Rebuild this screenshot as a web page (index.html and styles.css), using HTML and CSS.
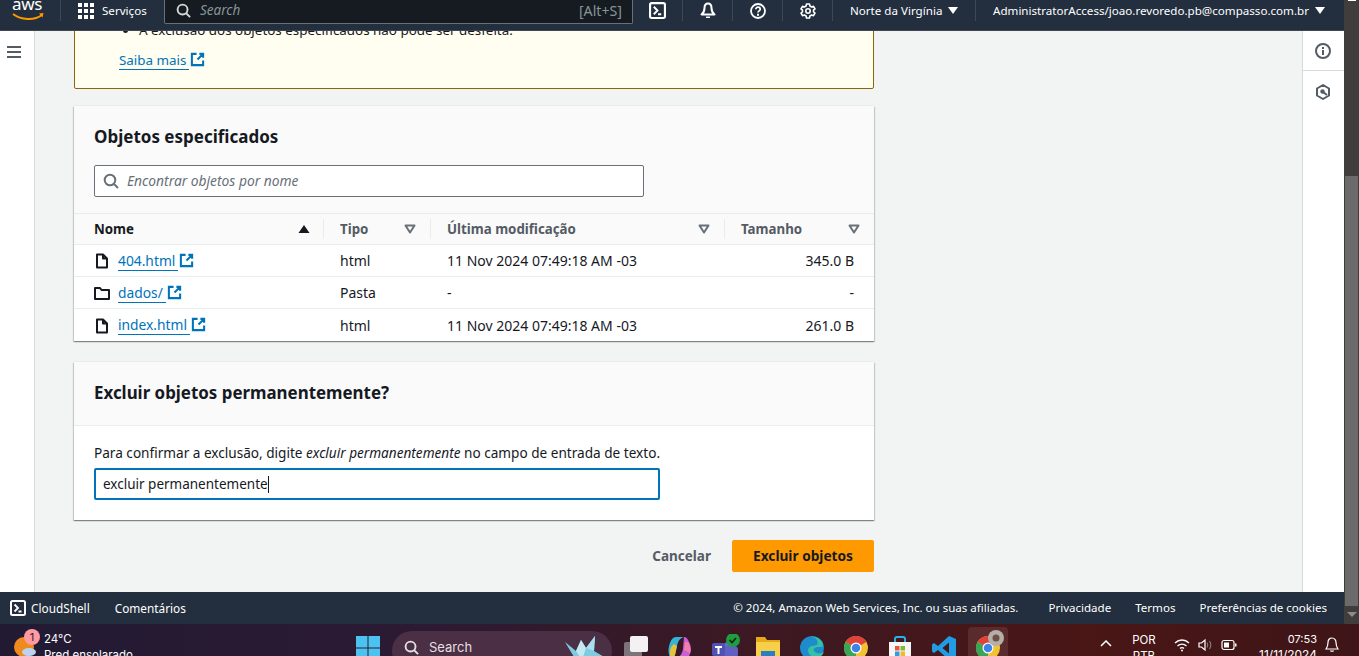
FILE: index.html
```html
<!DOCTYPE html>
<html lang="pt-BR">
<head>
<meta charset="utf-8">
<title>Excluir objetos</title>
<link rel="stylesheet" href="styles.css">
</head>
<body>
<svg class="defs" width="0" height="0" aria-hidden="true">
  <symbol id="ext" viewBox="0 0 16 16"><path d="M7 2H2v12h12V9M10 2h4v4M14 2L8 8" fill="none" stroke="currentColor" stroke-width="2.2"/></symbol>
  <symbol id="file" viewBox="0 0 16 16"><path d="M9 1.500H3v13h10V5.500zM9 1.500v4h4" fill="none" stroke="currentColor" stroke-width="2" stroke-linejoin="round"/></symbol>
  <symbol id="folder" viewBox="0 0 16 16"><path d="M1 3h5l1.500 2H15v9H1z" fill="none" stroke="currentColor" stroke-width="2" stroke-linejoin="round"/></symbol>
  <symbol id="shell" viewBox="0 0 16 16"><rect x="1" y="1" width="14" height="14" rx="1.500" fill="none" stroke="currentColor" stroke-width="2"/><path d="M4.500 4.500L8 8l-3.500 3.500M8.500 11.500H11.500" fill="none" stroke="currentColor" stroke-width="1.800"/></symbol>
  <symbol id="down" viewBox="0 0 12 10"><path d="M1.500 1.500h9L6 8.500z" fill="none" stroke="currentColor" stroke-width="2" stroke-linejoin="round"/></symbol>
  <symbol id="lens" viewBox="0 0 16 16"><circle cx="7" cy="7" r="5.300" fill="none" stroke="currentColor" stroke-width="2"/><path d="M11 11l4 4" stroke="currentColor" stroke-width="2"/></symbol>
  <symbol id="chrome" viewBox="0 0 24 24"><circle cx="12" cy="12" r="12" fill="#f2c230"/><path d="M12 12L1.600 6A12 12 0 0 1 22.400 6z" fill="#e0423a"/><path d="M12 12L1.600 6A12 12 0 0 0 12 24z" fill="#3aa655"/><circle cx="12" cy="12" r="5.500" fill="#fff"/><circle cx="12" cy="12" r="4.300" fill="#3f83ea"/></symbol>
</svg>

<div class="screen">
  <div class="window">
    <div class="app">
      <header class="topbar">
        <div class="logo">
          <span class="logo-text">aws</span>
          <svg class="logo-smile" viewBox="0 0 32 8" width="32" height="8"><path d="M1 1c8 6 21 7 29 1" fill="none" stroke="#f90" stroke-width="2"/><path d="M27 0.500l4.500-.5-1 4.500z" fill="#f90"/></svg>
        </div>
        <div class="services">
          <svg class="grid-icon" viewBox="0 0 16 16" width="16" height="16"><path d="M0 0h4v4H0zM6 0h4v4H6zM12 0h4v4h-4zM0 6h4v4H0zM6 6h4v4H6zM12 6h4v4h-4zM0 12h4v4H0zM6 12h4v4H6zM12 12h4v4h-4z" fill="#fff"/></svg>
          <span>Serviços</span>
        </div>
        <div class="topsearch">
          <svg class="tb-lens" width="15" height="15"><use href="#lens"/></svg>
          <span class="ts-ph">Search</span>
          <span class="ts-key">[Alt+S]</span>
        </div>
        <div class="tb-icon tb-first"><svg width="17" height="17"><use href="#shell"/></svg></div>
        <div class="tb-icon">
          <svg width="16" height="17" viewBox="0 0 16 17"><path d="M8 1.500c-2.500 0-3.500 2-3.500 4.500 0 3-1 5-3 6.500h13c-2-1.500-3-3.500-3-6.500 0-2.500-1-4.500-3.500-4.500z" fill="none" stroke="#fff" stroke-width="2" stroke-linejoin="round"/><path d="M6 14.500h4V16H6z" fill="#fff"/></svg>
        </div>
        <div class="tb-icon">
          <svg width="16" height="16" viewBox="0 0 16 16"><circle cx="8" cy="8" r="7" fill="none" stroke="#fff" stroke-width="1.800"/><path d="M5.800 6.300C5.800 5 6.800 4.200 8 4.200s2.200.8 2.200 2c0 1.700-2.200 1.700-2.200 3.400" fill="none" stroke="#fff" stroke-width="1.700"/><path d="M7 10.800h2v1.900H7z" fill="#fff"/></svg>
        </div>
        <div class="tb-icon">
          <svg width="16" height="16" viewBox="0 0 16 16"><path d="M6.500 1h3l.4 2 1.700 1 1.900-.7 1.500 2.600-1.500 1.300v1.600l1.500 1.300-1.500 2.600-1.900-.7-1.700 1-.4 2h-3l-.4-2-1.700-1-1.900.7L1 10.100l1.500-1.300V7.200L1 5.900l1.500-2.600 1.900.7 1.700-1z" fill="none" stroke="#fff" stroke-width="1.600" stroke-linejoin="round"/><circle cx="8" cy="8" r="2.200" fill="none" stroke="#fff" stroke-width="1.600"/></svg>
        </div>
        <div class="tb-menu tb-region">Norte da Virgínia<i class="caret"></i></div>
        <div class="tb-menu tb-user">AdministratorAccess/joao.revoredo.pb@compasso.com.br<i class="caret"></i></div>
      </header>

      <div class="body">
        <aside class="rail-left">
          <svg width="14" height="12" viewBox="0 0 14 12"><path d="M0 1h14M0 6h14M0 11h14" stroke="#545b64" stroke-width="2"/></svg>
        </aside>

        <main class="content">
          <section class="alert">
            <ul class="alert-list"><li>A exclusão dos objetos especificados não pode ser desfeita.</li></ul>
            <p class="alert-link"><a class="link link-ext" href="#">Saiba mais</a><svg class="ext" width="15" height="15"><use href="#ext"/></svg></p>
          </section>

          <section class="card card-objects">
            <div class="card-head">
              <h2>Objetos especificados</h2>
              <div class="find">
                <svg class="find-lens" width="16" height="16"><use href="#lens"/></svg>
                <span>Encontrar objetos por nome</span>
              </div>
            </div>
            <table class="objects">
              <colgroup><col class="c1"><col class="c2"><col class="c3"><col class="c4"></colgroup>
              <thead>
                <tr>
                  <th class="th-first"><div class="th-in th-active">Nome<svg class="sort" width="12" height="10" viewBox="0 0 12 10"><path d="M6 1l5.500 8H.5z" fill="#16191f"/></svg></div></th>
                  <th><div class="th-in">Tipo<svg class="sort" width="12" height="10"><use href="#down"/></svg></div></th>
                  <th><div class="th-in">Última modificação<svg class="sort" width="12" height="10"><use href="#down"/></svg></div></th>
                  <th><div class="th-in th-last">Tamanho<svg class="sort" width="12" height="10"><use href="#down"/></svg></div></th>
                </tr>
              </thead>
              <tbody>
                <tr>
                  <td class="td-first"><div class="name"><svg class="ficon" width="16" height="16"><use href="#file"/></svg><a class="link link-ext" href="#">404.html</a><svg class="ext" width="15" height="15"><use href="#ext"/></svg></div></td>
                  <td>html</td><td>11 Nov 2024 07:49:18 AM -03</td><td class="num">345.0 B</td>
                </tr>
                <tr>
                  <td class="td-first"><div class="name"><svg class="ficon" width="16" height="16"><use href="#folder"/></svg><a class="link link-ext" href="#">dados/</a><svg class="ext" width="15" height="15"><use href="#ext"/></svg></div></td>
                  <td>Pasta</td><td>-</td><td class="num">-</td>
                </tr>
                <tr>
                  <td class="td-first"><div class="name"><svg class="ficon" width="16" height="16"><use href="#file"/></svg><a class="link link-ext" href="#">index.html</a><svg class="ext" width="15" height="15"><use href="#ext"/></svg></div></td>
                  <td>html</td><td>11 Nov 2024 07:49:18 AM -03</td><td class="num">261.0 B</td>
                </tr>
              </tbody>
            </table>
          </section>

          <section class="card card-confirm">
            <div class="confirm-head"><h2>Excluir objetos permanentemente?</h2></div>
            <div class="confirm-body">
              <p>Para confirmar a exclusão, digite <em>excluir permanentemente</em> no campo de entrada de texto.</p>
              <div class="confirm-input"><span>excluir permanentemente</span><i class="cursor"></i></div>
            </div>
          </section>

          <div class="actions">
            <span class="btn-cancel">Cancelar</span>
            <span class="btn-primary">Excluir objetos</span>
          </div>
        </main>

        <aside class="rail-right">
          <div class="rail-btn rail-btn-first">
            <svg width="16" height="16" viewBox="0 0 16 16"><circle cx="8" cy="8" r="7" fill="none" stroke="#545b64" stroke-width="2"/><path d="M7 7h2v5H7zM7 4h2v2H7z" fill="#545b64"/></svg>
          </div>
          <div class="rail-btn">
            <svg width="14" height="16" viewBox="0 0 14 16"><path d="M7 1l6 3.500v7L7 15l-6-3.500v-7z" fill="none" stroke="#545b64" stroke-width="2" stroke-linejoin="round"/><circle cx="6.500" cy="7.500" r="2.200" fill="#545b64"/><path d="M7 8l4 3" stroke="#545b64" stroke-width="2"/></svg>
          </div>
        </aside>
      </div>

      <footer class="footbar">
        <div class="foot-left">
          <svg width="16" height="16"><use href="#shell"/></svg><span class="foot-shell">CloudShell</span><span class="foot-comments">Comentários</span>
        </div>
        <div class="foot-right">
          <span class="foot-copy">© 2024, Amazon Web Services, Inc. ou suas afiliadas.</span>
          <span>Privacidade</span><span>Termos</span><span>Preferências de cookies</span>
        </div>
      </footer>
    </div>
    <div class="scrollbar">
      <i class="sb-top"></i>
      <i class="sb-thumb"></i>
      <i class="sb-arrow"></i>
    </div>
  </div>

  <div class="taskbar">
    <div class="weather">
      <div class="weather-icon">
        <svg width="24" height="24" viewBox="0 0 24 24"><circle cx="10" cy="12" r="10" fill="#ef8a1f"/><ellipse cx="15" cy="17" rx="7" ry="4" fill="#b9d3f2"/></svg>
        <b class="badge">1</b>
      </div>
      <div class="weather-text"><span>24°C</span><span>Pred ensolarado</span></div>
    </div>
    <svg class="win" width="24" height="24" viewBox="0 0 24 24"><path d="M0 0h11.500v11.500H0zM12.500 0H24v11.500H12.500zM0 12.500h11.500V24H0zM12.500 12.500H24V24H12.500z" fill="#4cc2f1"/></svg>
    <div class="winsearch">
      <svg class="ws-lens" width="15" height="15"><use href="#lens"/></svg>
      <span>Search</span>
      <svg class="ws-crane" width="46" height="26" viewBox="0 0 46 26"><path d="M0 6l11 9 5-11 5 8 9-12-1 15 12 7-10 4H12z" fill="#7fcbe0"/><path d="M16 4l5 8-4 12-6-9z" fill="#c4e9f2"/><path d="M30 0l-1 15-8-3z" fill="#a9dfec"/></svg>
    </div>
    <div class="apps">
      <svg width="24" height="24" viewBox="0 0 24 24"><rect x="0" y="6" width="18" height="18" rx="2" fill="#7d7479"/><rect x="6" y="0" width="18" height="16" rx="2" fill="#f4f1f2"/></svg>
      <svg width="24" height="24" viewBox="0 0 24 24"><path d="M8 1h8c-4 1-6 4-7 9l-2 9c-1 2-3 3-5 2-2-3-2-9 0-14 1-3 3-6 6-6z" fill="#35b5d6"/><path d="M2 16c0-3 1-6 4-8l3 2-2 9c-1 2-3 3-5 2z" fill="#e8c13c"/><path d="M16 1c2 0 3 1 4 3 3 5 4 10 2 14-1 3-3 4-6 4H8c4-1 6-4 7-9l1-12z" fill="#c85fd6"/><path d="M20 6c2 3 3 7 2 11l-6-3 1-8z" fill="#ee7fa8"/></svg>
      <svg class="teams" width="28" height="24" viewBox="0 0 28 24"><circle cx="16" cy="13" r="5" fill="#6a6ad0"/><rect x="10" y="12" width="16" height="12" rx="4" fill="#5f5fc4"/><rect x="0" y="9" width="13" height="13" rx="2" fill="#4f52b2"/><path d="M3 12h7v2H7.500v6h-2v-6H3z" fill="#fff"/><circle cx="21" cy="6" r="7" fill="#1f9d3f"/><path d="M17.500 6l2.500 2.500 4-4.500" fill="none" stroke="#10221a" stroke-width="1.600"/></svg>
      <svg width="24" height="24" viewBox="0 0 24 24"><path d="M0 1h9l2 3h13v20H0z" fill="#e8a917"/><path d="M0 6h24v18H0z" fill="#f8cf4b"/><rect x="5" y="15" width="14" height="9" fill="#2a7fc1"/></svg>
      <svg width="24" height="24" viewBox="0 0 24 24"><circle cx="12" cy="12" r="12" fill="#1e8bcd"/><path d="M23 9C22 3 16 0 11 1 16 1 19 5 17 9c-3 1-8 0-9 5 0 5 5 9 11 7 3-1 4-3 5-5-3 2-8 2-10-1-1-2 1-4 4-4 3 0 5 0 5-2z" fill="#35c1a5"/></svg>
      <svg width="24" height="24"><use href="#chrome"/></svg>
      <svg width="24" height="24" viewBox="0 0 24 24"><path d="M7 6V3a2 2 0 0 1 2-2h6a2 2 0 0 1 2 2v3" fill="none" stroke="#2bb0e6" stroke-width="2"/><rect x="1" y="6" width="22" height="18" fill="#f5f5f5"/><path d="M7 10h4.500v4.500H7z" fill="#e8553a"/><path d="M12.500 10H17v4.500h-4.500z" fill="#7db93a"/><path d="M7 15.500h4.500V20H7z" fill="#2b9de0"/><path d="M12.500 15.500H17V20h-4.500z" fill="#f5b82a"/></svg>
      <svg width="24" height="24" viewBox="0 0 24 24"><path d="M17 0l7 3v18l-7 3L6 14l-4 3-2-1.500V8.500L2 7l4 3zM17 6.500L10.500 12l6.500 5.500z" fill="#1f9ce4"/></svg>
      <div class="app-active">
        <svg width="24" height="24"><use href="#chrome"/></svg>
        <svg class="avatar" width="16" height="16" viewBox="0 0 16 16"><circle cx="8" cy="8" r="8" fill="#b5afa9"/><circle cx="8" cy="8" r="3.500" fill="#6d5146"/></svg>
      </div>
    </div>
    <div class="tray">
      <svg class="tray-chev" width="12" height="7" viewBox="0 0 12 7"><path d="M1 6l5-5 5 5" fill="none" stroke="#fff" stroke-width="1.500"/></svg>
      <div class="tray-lang"><span>POR</span><span>PTB</span></div>
      <svg class="tray-wifi" width="16" height="14" viewBox="0 0 16 14"><path d="M1 5c4-4 10-4 14 0M3.500 8c2.500-2.500 6.500-2.500 9 0M6 10.500c1-1 3-1 4 0" fill="none" stroke="#fff" stroke-width="1.300"/><circle cx="8" cy="12.500" r="1" fill="#fff"/></svg>
      <svg class="tray-vol" width="16" height="14" viewBox="0 0 16 14"><path d="M1 5h2.500L7 2v10L3.500 9H1z" fill="none" stroke="#fff" stroke-width="1.200"/><path d="M9 4.500c1 1.500 1 3.500 0 5M11.500 3c1.600 2.500 1.600 5.500 0 8" fill="none" stroke="#8b7f82" stroke-width="1.100"/></svg>
      <svg class="tray-bat" width="16" height="12" viewBox="0 0 16 12"><rect x="1" y="1.500" width="12" height="9" rx="2" fill="none" stroke="#fff" stroke-width="1.200"/><rect x="3" y="3.500" width="5" height="5" fill="#fff"/><path d="M14 4.500h1.500v3H14z" fill="#fff"/></svg>
      <div class="tray-time"><span>07:53</span><span class="tray-date">11/11/2024</span></div>
      <svg class="tray-bell" width="14" height="16" viewBox="0 0 14 16"><path d="M7 1C4.500 1 3 3 3 5.500 3 9 2 10.500 1 12h12c-1-1.500-2-3-2-6.500C11 3 9.500 1 7 1zM5.500 13.500c.3 1 2.700 1 3 0" fill="none" stroke="#fff" stroke-width="1.200"/></svg>
    </div>
  </div>
</div>
</body>
</html>
```

FILE: styles.css
```css
* { box-sizing: border-box; }
html, body { margin: 0; padding: 0; height: 100%; overflow: hidden; }
body { font-family: "Noto Sans", "Open Sans", sans-serif; font-size: 14px; color: #16191f; }
.defs { display: block; height: 0; }
h2, p, ul { margin: 0; padding: 0; }
a { text-decoration: none; }

.screen { width: 1359px; height: 656px; display: flex; flex-direction: column; overflow: hidden; }
.window { display: flex; height: 624px; flex: none; }
.app { width: 1344px; display: flex; flex-direction: column; }

/* top bar */
.topbar { height: 31px; flex: none; background: #232f3e; border-bottom: 1px solid #414750; display: flex; align-items: flex-start; color: #fff; font-size: 11.600px; position: relative; z-index: 2; }
.logo { width: 61px; height: 21px; padding-left: 12px; border-right: 1px solid #414750; display: flex; flex-direction: column; }
.logo-text { font-size: 17px; line-height: 14px; margin-top: -3px; letter-spacing: -.3px; color: #fff; }
.logo-smile { margin-top: 2px; display: block; }
.services { width: 103px; height: 21px; padding-left: 17px; display: flex; align-items: center; gap: 8px; }
.grid-icon { flex: none; }
.topsearch { width: 469px; height: 24px; background: #161b22; border: 1px solid #687078; border-top: 0; border-radius: 0 0 2px 2px; display: flex; align-items: center; padding: 0 10px 3px 11px; color: #d5dbdb; }
.tb-lens { color: #d5dbdb; flex: none; }
.ts-ph { margin-left: 9px; font-style: italic; color: #879596; font-size: 13.500px; }
.ts-key { margin-left: auto; color: #879596; font-size: 14.200px; }
.tb-icon { width: 50px; height: 21px; border-right: 1px solid #414750; display: flex; align-items: center; justify-content: center; color: #fff; flex: none; }
.tb-menu { display: flex; align-items: center; height: 21px; white-space: nowrap; flex: none; }
.tb-region { width: 143px; padding-left: 17px; border-right: 1px solid #414750; }
.tb-user { padding-left: 17px; }
.caret { width: 0; height: 0; border-left: 5px solid transparent; border-right: 5px solid transparent; border-top: 7px solid #fff; margin-left: 6px; flex: none; }

/* body */
.body { height: 561px; flex: none; display: flex; background: #f2f3f3; overflow: hidden; }
.rail-left { width: 35px; flex: none; background: #fff; border-right: 1px solid #d5dbdb; padding: 15px 0 0 7px; }
.rail-left svg { display: block; }
.content { width: 800px; margin-left: 39px; flex: none; }
.rail-right { width: 42px; margin-left: auto; flex: none; background: #fff; border-left: 1px solid #d5dbdb; }
.rail-btn { height: 40px; display: flex; align-items: center; justify-content: center; padding: 1px 1px 0 0; }
.rail-btn-first { border-bottom: 1px solid #d5dbdb; }

/* alert */
.alert { height: 100px; margin-top: -42px; background: #fffef0; border: 1px solid #8d6605; border-radius: 2px; padding: 30px 0 0 44px; color: #16191f; font-size: 13.400px; }
.alert-list { padding-left: 20px; line-height: 20px; }
.alert-link { margin-top: 11px; display: flex; align-items: center; line-height: 20px; }
.link { color: #0073bb; }
.link-ext { border-bottom: 1px solid #0073bb; padding-right: 3px; line-height: 18px; }
.ext { color: #0073bb; margin-left: 1px; flex: none; position: relative; top: -1px; }

/* cards */
.card { background: #fff; box-shadow: 0 1px 1px 0 rgba(0,28,36,.3), 1px 1px 1px 0 rgba(0,28,36,.15), -1px 1px 1px 0 rgba(0,28,36,.15), 0 -1px 0 0 #eaeded; }
.card-objects { margin-top: 17px; }
.card-head { background: #fafafa; padding: 18px 20px 0; height: 108px; border-bottom: 1px solid #eaeded; }
h2 { font-size: 17px; line-height: 26px; font-weight: 700; color: #16191f; }
.find { margin-top: 15px; width: 550px; height: 32px; background: #fff; border: 1px solid #687078; border-radius: 2px; display: flex; align-items: center; padding: 0 0 1px 8px; gap: 8px; font-style: italic; color: #687078; font-size: 13.800px; }
.find-lens { color: #687078; flex: none; }

.objects { width: 800px; table-layout: fixed; border-collapse: collapse; }
.c1 { width: 249px; } .c2 { width: 107px; } .c3 { width: 294px; } .c4 { width: 150px; }
th { background: #fafafa; height: 30px; padding: 0; border-bottom: 1px solid #eaeded; text-align: left; font-weight: 700; color: #545b64; font-size: 13.300px; }
.th-in { height: 20px; border-left: 1px solid #eaeded; padding: 0 8px 0 16px; display: flex; align-items: center; justify-content: space-between; line-height: 20px; }
.th-first .th-in { border-left: 0; padding-left: 20px; padding-right: 13px; }
.th-active { color: #16191f; }
.th-last { padding-right: 14px; padding-left: 16px; }
.sort { color: #687078; flex: none; margin-right: 6px; }
.th-last .sort { margin-right: 0; }
.th-first .sort { margin-right: 0; }
td { height: 32px; padding: 2px 0 0 17px; border-bottom: 1px solid #eaeded; color: #16191f; line-height: 20px; }
tbody tr:last-child td { border-bottom: 0; height: 33px; }
.td-first { padding-left: 20px; }
.num { text-align: right; padding-right: 20px; }
.name { display: flex; align-items: center; }
.ficon { color: #16191f; margin-right: 8px; flex: none; }
.ficon + .link { font-size: 13.800px; }

/* confirm */
.card-confirm { margin-top: 21px; height: 158px; }
.confirm-head { height: 64px; background: #fafafa; border-bottom: 1px solid #eaeded; padding: 18px 20px 0; }
.confirm-head h2 { font-size: 16.900px; }
.confirm-body { padding: 17px 20px 0; }
.confirm-body p { line-height: 20px; font-size: 13.600px; }
.confirm-input { width: 566px; height: 32px; margin-top: 5px; border: 2px solid #0073bb; border-radius: 2px; display: flex; align-items: center; padding-left: 7px; background: #fff; font-size: 13.500px; }
.cursor { width: 1px; height: 17px; background: #16191f; flex: none; }

/* actions */
.actions { margin-top: 20px; display: flex; justify-content: flex-end; align-items: center; }
.btn-cancel { font-weight: 700; color: #545b64; margin-right: 21px; font-size: 13.500px; padding-bottom: 1px; }
.btn-primary { width: 142px; height: 32px; background: #ff9900; border-radius: 2px; font-weight: 700; color: #16191f; display: flex; align-items: center; justify-content: center; font-size: 13.700px; padding-bottom: 1px; }

/* footer */
.footbar { height: 32px; flex: none; background: #232f3e; color: #fff; font-size: 11.550px; display: flex; align-items: center; justify-content: space-between; padding: 0 17px 0 10px; }
.foot-left, .foot-right { display: flex; align-items: center; }
.foot-left { font-size: 11.800px; }
.foot-left span { padding-bottom: 1px; }
.foot-right span { padding-bottom: 2px; }
.foot-shell { margin-left: 5px; }
.foot-comments { margin-left: 25px; }
.foot-right { gap: 24px; }
.foot-copy { margin-right: 6px; }

/* scrollbar */
.scrollbar { width: 15px; flex: none; background: #3f3e3c; display: flex; flex-direction: column; align-items: center; }
.sb-top { width: 8px; height: 1px; background: #fff; margin-bottom: 175px; }
.sb-thumb { width: 13px; height: 430px; background: #6b6b6b; }
.sb-arrow { width: 0; height: 0; margin-top: 6px; border-left: 5px solid transparent; border-right: 5px solid transparent; border-top: 5px solid #8c8c8c; }

/* taskbar */
.taskbar { height: 32px; flex: none; background: linear-gradient(90deg, #221a33 0%, #2c1a33 30%, #3f1820 60%, #4a1616 80%, #3e1518 100%); display: flex; color: #fff; overflow: hidden; font-family: "Inter", "Noto Sans", sans-serif; font-size: 12px; }
.weather { width: 356px; flex: none; display: flex; padding: 5px 0 0 14px; }
.weather-icon { width: 30px; height: 40px; padding-top: 6px; position: relative; flex: none; }
.badge { position: absolute; left: 10px; top: 0; width: 16px; height: 16px; border-radius: 50%; background: #ff9aa2; color: #3a1a20; font-weight: 400; font-size: 11px; line-height: 16px; text-align: center; }
.weather-text { display: flex; flex-direction: column; line-height: 16px; font-size: 11.500px; white-space: nowrap; padding-top: 2px; }
.win { margin: 12px 0 0 0; flex: none; }
.winsearch { width: 220px; height: 40px; margin: 7px 0 0 12px; flex: none; border-radius: 20px; background: #4b3045; display: flex; align-items: flex-start; padding: 8px 0 0 12px; color: #e6dfe3; font-size: 13px; }
.winsearch span { margin-left: 10px; }
.ws-lens { color: #e6dfe3; flex: none; margin-top: 1px; }
.ws-crane { margin-left: auto; margin-right: 1px; margin-top: -3px; flex: none; }
.apps { display: flex; gap: 20px; margin-left: 12px; padding-top: 12px; flex: none; align-items: flex-start; }
.apps svg { flex: none; }
.teams { margin-right: -4px; margin-top: -2px; }
.app-active { width: 40px; height: 40px; margin: -9px 0 0 -8px; padding: 9px 0 0 8px; background: #5a2a2c; border-radius: 4px; position: relative; }
.avatar { position: absolute; left: 20px; top: 3px; }
.tray { flex: none; display: flex; align-items: flex-start; margin-left: 92px; }
.tray-chev { margin-top: 16px; flex: none; }
.tray-lang { width: 40px; margin-left: 12px; display: flex; flex-direction: column; align-items: center; padding-top: 8px; line-height: 16px; font-size: 11.500px; }
.tray-wifi { margin: 14px 0 0 10px; flex: none; }
.tray-vol { margin: 14px 0 0 8px; flex: none; }
.tray-bat { margin: 15px 0 0 7px; flex: none; }
.tray-time { width: 80px; display: flex; flex-direction: column; align-items: flex-end; padding-top: 8px; line-height: 14px; font-size: 11px; }
.tray-date { font-size: 12px; margin-top: 2px; }
.tray-bell { margin: 13px 0 0 8px; flex: none; }
```
